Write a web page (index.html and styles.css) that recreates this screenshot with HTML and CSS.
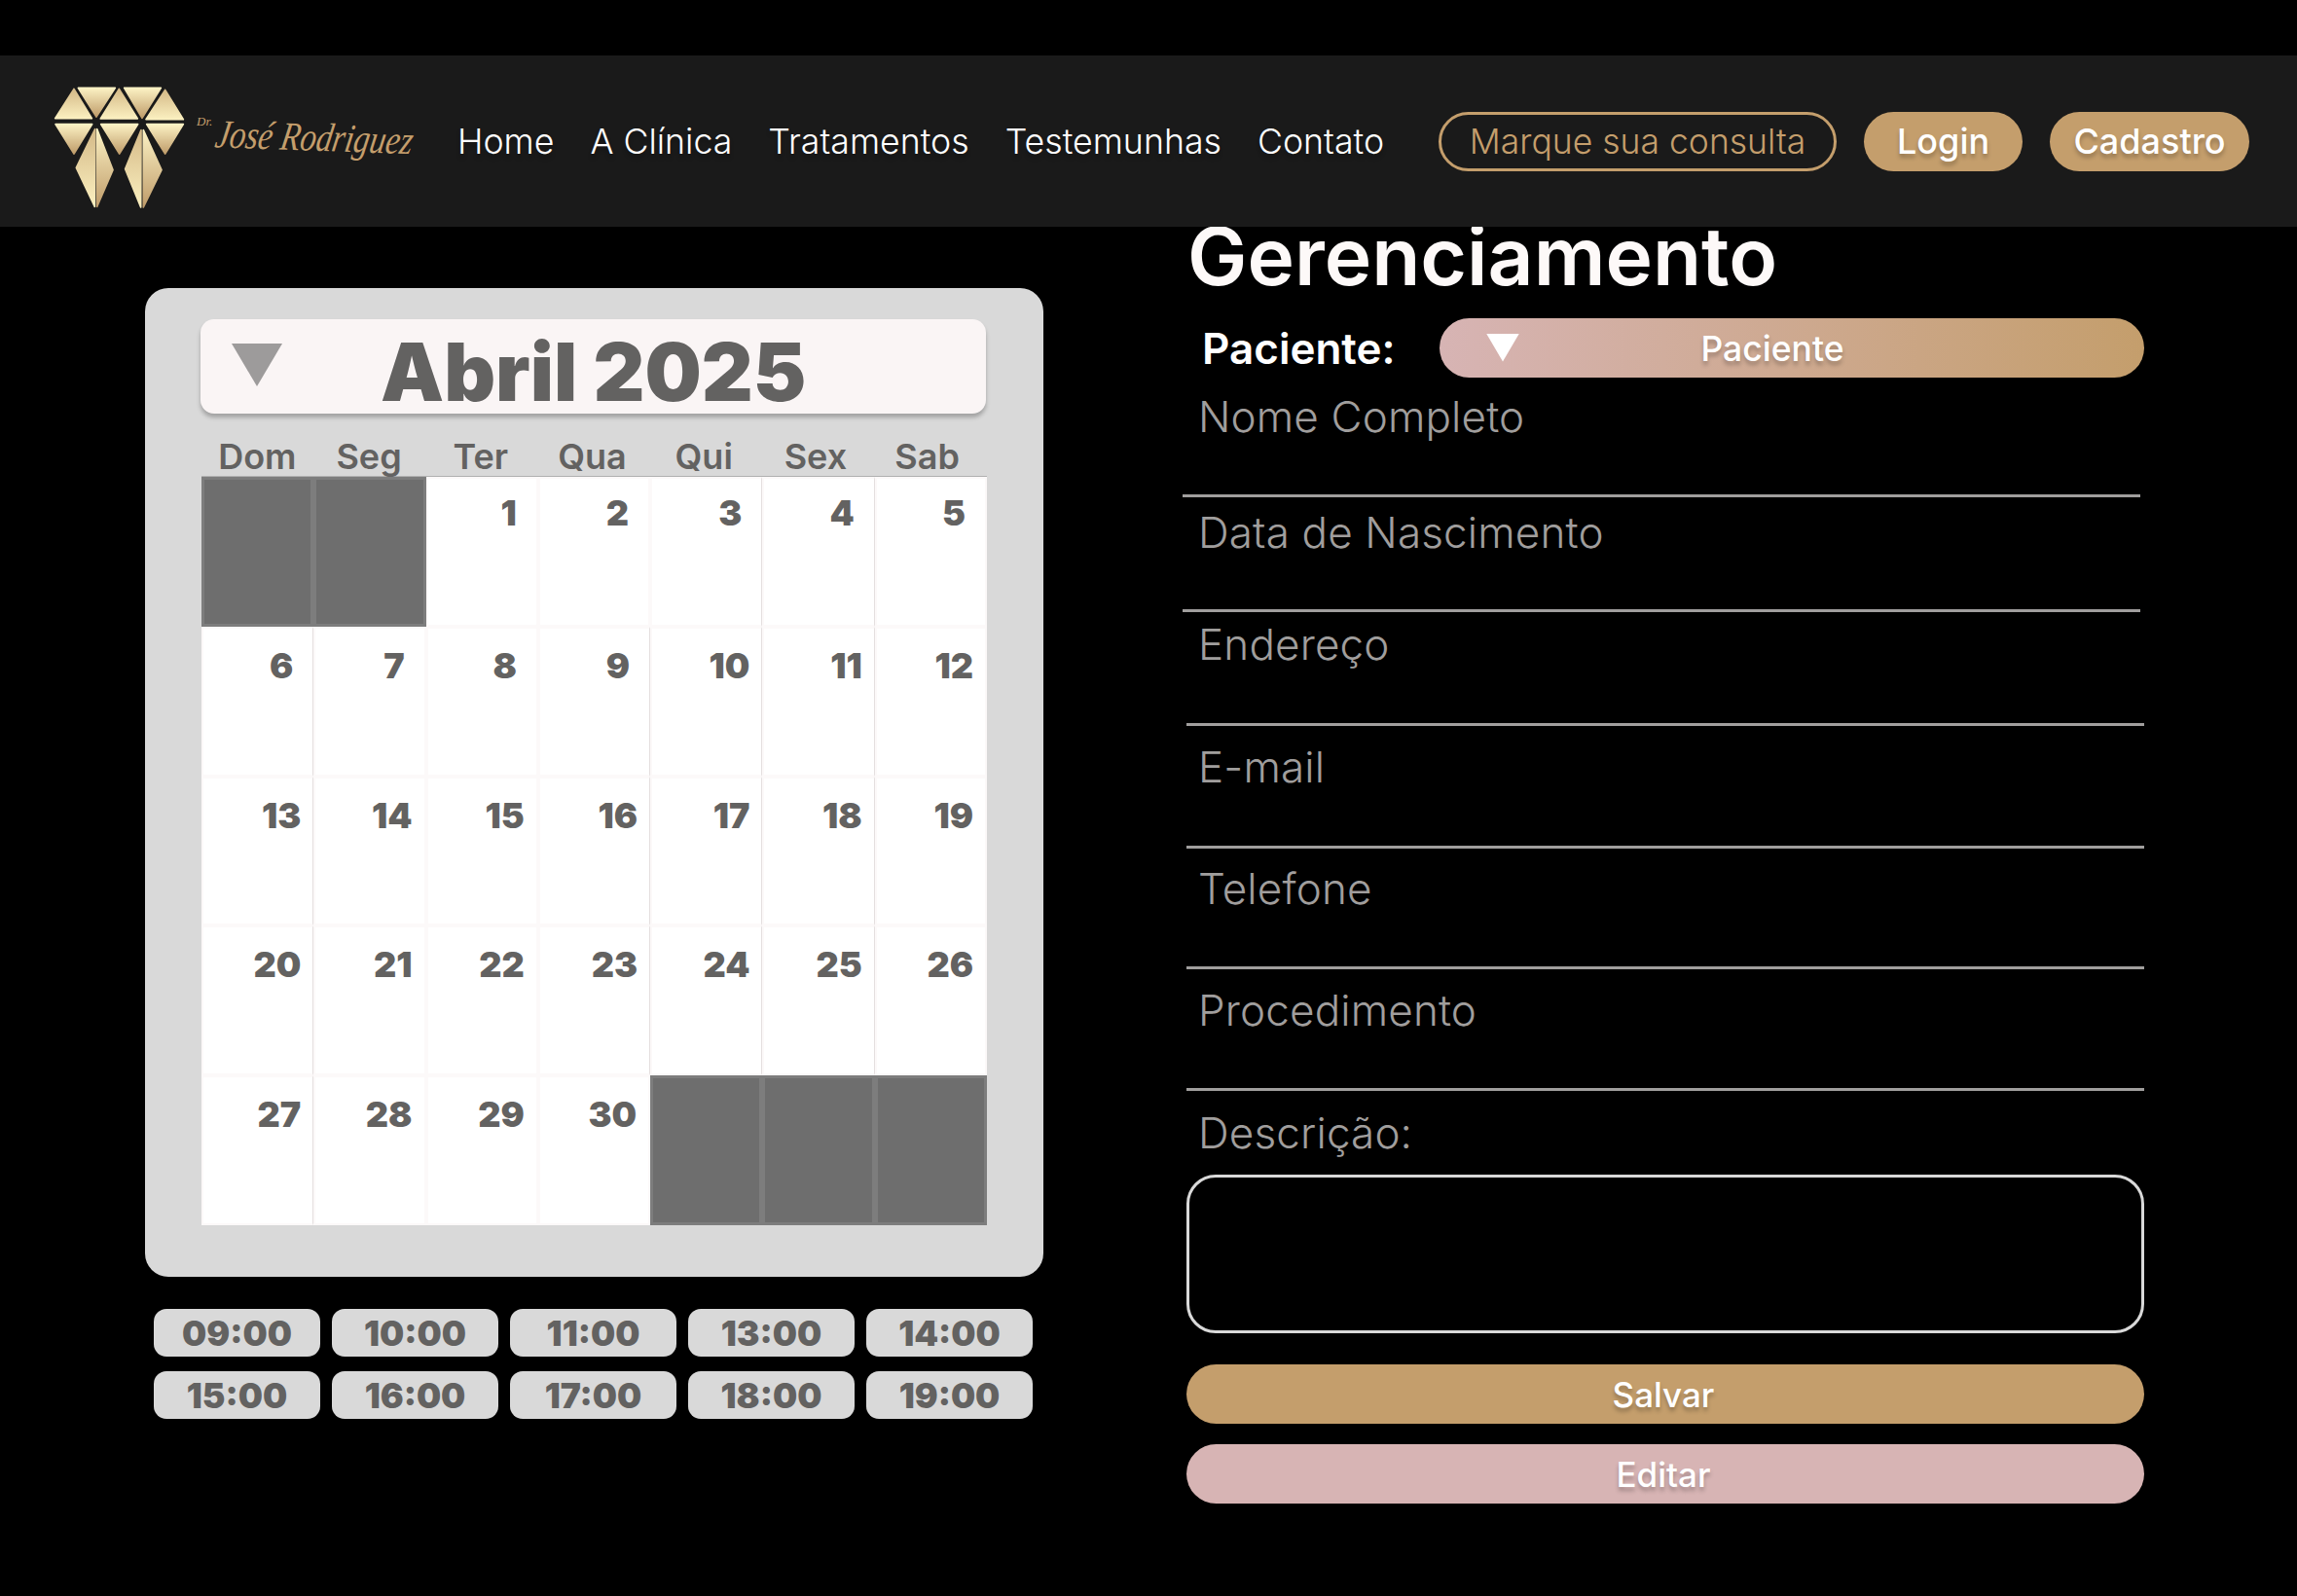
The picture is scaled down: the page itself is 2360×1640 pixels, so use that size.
FILE: index.html
```html
<!DOCTYPE html>
<html lang="pt-BR">
<head>
<meta charset="utf-8">
<title>Gerenciamento</title>
<link rel="stylesheet" href="styles.css">
</head>
<body>
<header class="topbar">
  <div class="brand">
    <svg class="brand-mark" viewBox="165 148 405 375" width="135" height="125" aria-hidden="true">
      <defs>
        <linearGradient id="up" x1="0" y1="0" x2="0" y2="1"><stop offset="0" stop-color="#d4b987"/><stop offset="1" stop-color="#fbf0c0"/></linearGradient>
        <linearGradient id="down" x1="0" y1="0" x2="0" y2="1"><stop offset="0" stop-color="#fcf2c4"/><stop offset="1" stop-color="#bf9c6a"/></linearGradient>
      </defs>
      <g stroke-linejoin="round" stroke-width="5">
        <path fill="url(#up)" stroke="url(#up)" d="M228 155 170 246H283Z"/>
        <path fill="url(#down)" stroke="url(#down)" d="M241 152H355L297 241Z"/>
        <path fill="url(#up)" stroke="url(#up)" d="M367 155 310 247H424Z"/>
        <path fill="url(#down)" stroke="url(#down)" d="M383 152H496L438 245Z"/>
        <path fill="url(#up)" stroke="url(#up)" d="M509 158 450 249H565Z"/>
        <path fill="url(#down)" stroke="url(#down)" d="M171 264H284L228 355Z"/>
        <path fill="url(#down)" stroke="url(#down)" d="M311 264H425L368 355Z"/>
        <path fill="url(#down)" stroke="url(#down)" d="M452 264H565L509 355Z"/>
        <path fill="url(#up)" stroke="url(#up)" d="M293 279 235 398 292 518Z"/>
        <path fill="url(#down)" stroke="url(#down)" d="M299 279 348 405 299 518Z"/>
        <path fill="url(#up)" stroke="url(#up)" d="M435 282 386 402 434 520Z"/>
        <path fill="url(#down)" stroke="url(#down)" d="M442 282 498 405 442 520Z"/>
      </g>
    </svg>
    <div class="brand-name"><span class="brand-title">Dr.</span><span class="brand-person">José Rodriguez</span></div>
  </div>
  <nav class="nav">
    <a class="nav-link">Home</a>
    <a class="nav-link">A Clínica</a>
    <a class="nav-link">Tratamentos</a>
    <a class="nav-link">Testemunhas</a>
    <a class="nav-link">Contato</a>
  </nav>
  <div class="actions">
    <a class="pill pill-outline">Marque sua consulta</a>
    <a class="pill pill-login">Login</a>
    <a class="pill pill-signup">Cadastro</a>
  </div>
</header>

<main class="main">
  <section class="schedule">
    <div class="calendar">
      <div class="month-bar">
        <span class="tri tri-grey"></span>
        <span class="month-name">Abril 2025</span>
      </div>
      <div class="weekdays">
        <span>Dom</span><span>Seg</span><span>Ter</span><span>Qua</span><span>Qui</span><span>Sex</span><span>Sab</span>
      </div>
      <div class="days">
        <div class="day off"></div><div class="day off"></div><div class="day one">1</div><div class="day one">2</div><div class="day one ruled">3</div><div class="day one ruled">4</div><div class="day one">5</div>
        <div class="day one ruled">6</div><div class="day one">7</div><div class="day one">8</div><div class="day one ruled">9</div><div class="day ruled">10</div><div class="day ruled">11</div><div class="day">12</div>
        <div class="day ruled">13</div><div class="day">14</div><div class="day">15</div><div class="day ruled">16</div><div class="day ruled">17</div><div class="day ruled">18</div><div class="day">19</div>
        <div class="day ruled">20</div><div class="day">21</div><div class="day">22</div><div class="day ruled">23</div><div class="day ruled">24</div><div class="day ruled">25</div><div class="day">26</div>
        <div class="day ruled">27</div><div class="day">28</div><div class="day">29</div><div class="day">30</div><div class="day off"></div><div class="day off"></div><div class="day off"></div>
      </div>
    </div>
    <div class="times">
      <span class="time">09:00</span><span class="time">10:00</span><span class="time">11:00</span><span class="time">13:00</span><span class="time">14:00</span>
      <span class="time">15:00</span><span class="time">16:00</span><span class="time">17:00</span><span class="time">18:00</span><span class="time">19:00</span>
    </div>
  </section>

  <section class="manage">
    <h1 class="manage-title">Gerenciamento</h1>
    <div class="patient-row">
      <span class="patient-label">Paciente:</span>
      <div class="select">
        <span class="tri tri-white"></span>
        <span class="select-text">Paciente</span>
      </div>
    </div>
    <div class="field field-a">Nome Completo</div>
    <div class="field field-b">Data de Nascimento</div>
    <div class="field field-c">Endereço</div>
    <div class="field field-d">E-mail</div>
    <div class="field field-e">Telefone</div>
    <div class="field field-f">Procedimento</div>
    <div class="desc-label">Descrição:</div>
    <div class="desc-box"></div>
    <button class="wide wide-save">Salvar</button>
    <button class="wide wide-edit">Editar</button>
  </section>
</main>
</body>
</html>
```

FILE: styles.css
```css
* { box-sizing: border-box; }
html, body { margin: 0; padding: 0; }
body {
  width: 2360px;
  height: 1640px;
  overflow: hidden;
  background: #000;
  font-family: Inter, "Liberation Sans", sans-serif;
  padding-top: 57px;
}

/* top bar */
.topbar {
  position: relative;
  z-index: 2;
  height: 176px;
  background: #1a1a1a;
  display: flex;
  align-items: center;
  padding-left: 55px;
}
.brand { display: flex; align-items: flex-start; width: 415px; height: 125px; margin-top: 13px; }
.brand-mark { display: block; flex: none; }
.brand-name { position: relative; margin-left: 10px; margin-top: 28px; color: #c49e6c; font-family: "Liberation Serif", serif; font-style: italic; white-space: nowrap; }
.brand-title { position: absolute; left: 2px; top: 0; font-size: 13px; }
.brand-person { display: block; font-size: 33px; margin-left: 22px; line-height: 48px; transform: rotate(2deg) skewX(-8deg) scaleY(1.25); }
.nav { display: flex; gap: 37px; }
.nav-link {
  color: #fff;
  font-size: 35.7px;
  font-weight: 300;
  line-height: 60px;
  text-shadow: 0 4px 4px rgba(0,0,0,.25);
}
.actions { display: flex; align-items: center; margin-left: 56px; }
.pill {
  height: 61px;
  border-radius: 31px;
  display: flex;
  align-items: center;
  justify-content: center;
  font-size: 36px;
}
.pill-outline {
  width: 409px;
  border: 3px solid #c49e6c;
  color: #c49e6c;
  font-size: 35.5px;
  font-weight: 300;
}
.pill-login, .pill-signup {
  background: #c49e6c;
  color: #fff;
  font-weight: 500;
  text-shadow: 0 4px 4px rgba(0,0,0,.25);
}
.pill-login { width: 163px; margin-left: 28px; }
.pill-signup { width: 205px; margin-left: 28px; }

/* main */
.main { display: flex; align-items: flex-start; }

/* calendar */
.schedule { width: 923px; margin-left: 149px; margin-top: 63px; }
.calendar {
  height: 1016px;
  background: #d9d9d9;
  border-radius: 24px;
  padding: 32px 59px 0 57px;
}
.month-bar {
  display: flex;
  align-items: center;
  height: 97px;
  background: #faf5f5;
  border-radius: 14px;
  padding-left: 32px;
  box-shadow: 0 4px 4px rgba(0,0,0,.25);
}
.tri { display: block; flex: none; }
.tri-grey {
  width: 52px;
  height: 44px;
  margin-top: -3px;
  background: #9d9b9b;
  clip-path: polygon(0 0, 100% 0, 50% 100%);
  filter: drop-shadow(0 2px 2px rgba(0,0,0,.25));
}
.month-name {
  margin-left: 101px;
  padding-top: 11px;
  color: #636261;
  font-size: 82px;
  font-weight: 900;
  line-height: 97px;
  white-space: nowrap;
}
.weekdays {
  display: grid;
  grid-template-columns: repeat(7, 1fr);
  height: 49px;
  margin: 15px 3px 0 1px;
  color: #636261;
  font-size: 36px;
  font-weight: 600;
  line-height: 58px;
  text-align: center;
}
.days {
  display: grid;
  grid-template-columns: repeat(7, 1fr);
  grid-auto-rows: 153.8px;
  margin: 0 -1px 0 1px;
  background: #fff;
  border-top: 1px solid #b0b0b0;
}
.day {
  background: #fff;
  border: 2px solid #fcf9f9;
  color: #636261;
  font-size: 36px;
  font-weight: 900;
  line-height: 42px;
  text-align: right;
  padding: 17px 12px 0 0;
}
.day:nth-child(-n+7) { padding-top: 14px; }
.day.one { padding-right: 20px; }
.day.ruled { border-right: 1px solid #e4dfdf; }
.day.off { background: #6e6e6e; border: 3px solid #7d7d7d; }

/* time slots */
.times {
  display: grid;
  grid-template-columns: repeat(5, 171px);
  grid-auto-rows: 49px;
  gap: 15px 12px;
  margin: 33px 0 0 9px;
}
.time {
  background: #d9d9d9;
  border-radius: 13px;
  color: #636261;
  font-size: 35.5px;
  font-weight: 900;
  line-height: 51px;
  text-align: center;
}

/* right column */
.manage { width: 984px; margin-left: 147px; }
.manage-title {
  margin: -19px 0 0 1px;
  color: #fdf9f8;
  font-size: 82px;
  font-weight: 600;
  line-height: 100px;
  white-space: nowrap;
}
.patient-row { display: flex; align-items: center; height: 61px; margin-top: 13px; }
.patient-label { width: 260px; padding-left: 16px; color: #fff; font-size: 44px; font-weight: 600; }
.select {
  width: 724px;
  height: 61px;
  border-radius: 31px;
  background: linear-gradient(90deg, #d7b4b4 0%, #c49e6c 100%);
  display: flex;
  align-items: center;
  padding: 0 122px 0 48px;
  color: #fff;
  font-size: 35.5px;
  font-weight: 500;
  text-shadow: 0 4px 4px rgba(0,0,0,.25);
}
.tri-white {
  width: 34px;
  height: 29px;
  margin-top: -1px;
  background: #fff;
  clip-path: polygon(0 0, 100% 0, 50% 100%);
}
.select-text { flex: 1; text-align: center; padding-top: 2px; }

.field {
  color: #a09e9d;
  font-size: 44px;
  font-weight: 300;
  letter-spacing: 0.15px;
  line-height: 50px;
  padding-left: 12px;
  border-bottom: 3px solid #a09e9d;
}
.field-a { height: 123px; padding-top: 15px; margin: 0 4px 0 -4px; padding-left: 16px; }
.field-b { height: 118px; padding-top: 11px; margin: 0 4px 0 -4px; padding-left: 16px; }
.field-c { height: 117px; padding-top: 8px; }
.field-d { height: 126px; padding-top: 17px; }
.field-e { height: 124px; padding-top: 16px; }
.field-f { height: 125px; padding-top: 17px; }
.desc-label {
  height: 86px;
  padding: 18px 0 0 12px;
  color: #a09e9d;
  font-size: 44px;
  font-weight: 300;
  letter-spacing: 0.15px;
  line-height: 50px;
}
.desc-box {
  height: 163px;
  border: 3px solid #d9d9d9;
  border-radius: 30px;
}
.wide {
  display: block;
  width: 984px;
  height: 61px;
  padding: 0 4px 0 0;
  border: 0;
  border-radius: 31px;
  color: #fff;
  font-family: inherit;
  font-size: 35px;
  font-weight: 500;
  text-shadow: 0 4px 4px rgba(0,0,0,.25);
}
.wide-save { background: #c49e6c; margin-top: 32px; }
.wide-edit { background: #d7b4b4; margin-top: 21px; }
```
